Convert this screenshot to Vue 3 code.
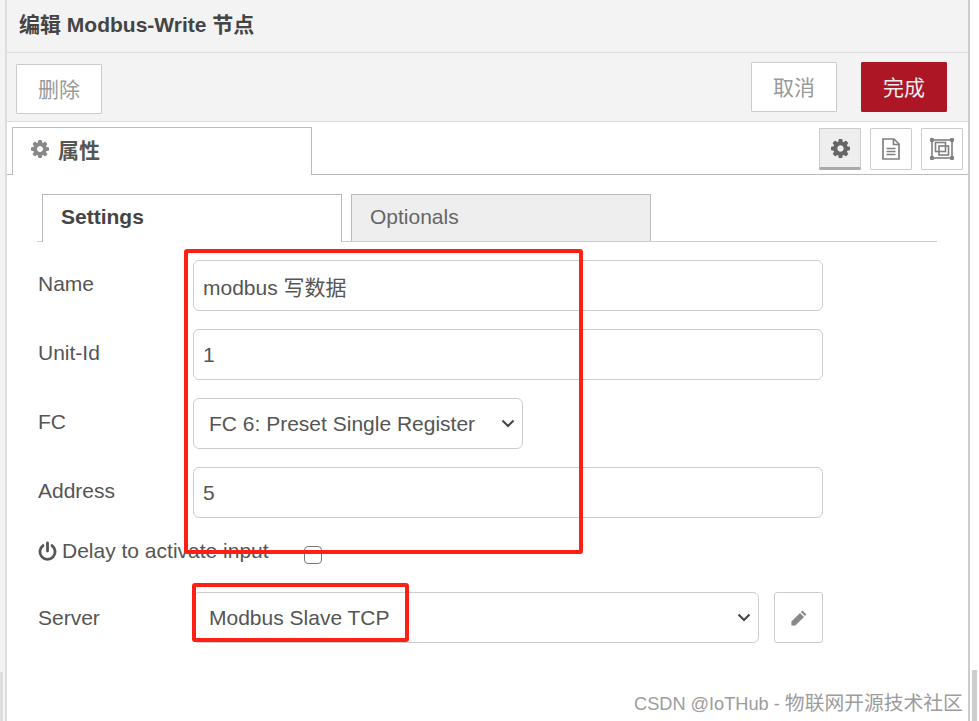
<template>
  <div class="screen">
    <div class="tray">
      <div class="tray-title">编辑 Modbus-Write 节点</div>
      <div class="tray-toolbar">
        <button class="btn delete-btn">删除</button>
        <div class="toolbar-right">
          <button class="btn">取消</button>
          <button class="btn primary">完成</button>
        </div>
      </div>

      <div class="tray-tabs">
        <div class="tray-tab">
          <svg class="tab-gear" viewBox="0 -128 1536 1536"><path :d="gearPath" /></svg>
          <span>属性</span>
        </div>
        <div class="tab-icons">
          <button class="icon-btn selected">
            <svg width="19" height="19" viewBox="0 -128 1536 1536"><path :d="gearPath" fill="#666" /></svg>
          </button>
          <button class="icon-btn">
            <svg width="20" height="22" viewBox="0 0 20 22" fill="none" stroke="#808080" stroke-width="1.7">
              <path d="M2 1h11l5 5v15H2z" />
              <path d="M12.5 1v5.5H18" />
              <path d="M5.5 10.5h9M5.5 13.5h9M5.5 16.5h9" />
            </svg>
          </button>
          <button class="icon-btn">
            <svg width="26" height="24" viewBox="0 0 26 24" fill="none" stroke="#808080" stroke-width="1.6">
              <rect x="3" y="3" width="20" height="18" />
              <rect x="6.5" y="5.5" width="10" height="9" />
              <rect x="10" y="9" width="9.5" height="9" />
              <g fill="#808080" stroke="none">
                <rect x="1" y="1" width="4" height="4" rx="1" />
                <rect x="21" y="1" width="4" height="4" rx="1" />
                <rect x="1" y="19" width="4" height="4" rx="1" />
                <rect x="21" y="19" width="4" height="4" rx="1" />
              </g>
            </svg>
          </button>
        </div>
      </div>

      <div class="tray-body">
        <div class="sub-tabs">
          <div class="sub-tab active">Settings</div>
          <div class="sub-tab">Optionals</div>
        </div>

        <div class="form">
          <div class="form-row">
            <label>Name</label>
            <input class="field" type="text" value="modbus 写数据" />
          </div>
          <div class="form-row">
            <label>Unit-Id</label>
            <input class="field" type="text" value="1" />
          </div>
          <div class="form-row">
            <label>FC</label>
            <select class="field picker fc-select">
              <option>FC 6: Preset Single Register</option>
            </select>
          </div>
          <div class="form-row">
            <label>Address</label>
            <input class="field" type="text" value="5" />
          </div>
          <div class="form-row delay-row">
            <label class="delay-label">
              <svg width="19" height="20" viewBox="0 0 19 20" fill="none" stroke="#555" stroke-width="2.8" stroke-linecap="round">
                <path d="M9.5 2v8" />
                <path d="M5 4.6a7.6 7.6 0 1 0 9 0" />
              </svg>
              Delay to activate input
            </label>
            <input class="check" type="checkbox" />
          </div>
          <div class="form-row">
            <label class="server-label">Server</label>
            <select class="field picker server-select">
              <option>Modbus Slave TCP</option>
            </select>
            <button class="edit-btn">
              <svg width="18" height="18" viewBox="0 0 18 18" fill="#888">
                <path d="M12.4 1.6l4 4-1.5 1.5-4-4z" />
                <path d="M10 4l4 4-8.6 8.6H1.4v-4z" />
              </svg>
            </button>
          </div>
        </div>
      </div>
    </div>

    <div class="scroll-left"></div>
    <div class="scroll-right"></div>
    <div class="mark mark-main"></div>
    <div class="mark mark-server"></div>
    <div class="watermark"><span class="mark-latin">CSDN @IoTHub - </span>物联网开源技术社区</div>
  </div>
</template>

<script setup>
const gearPath = 'M1024 640q0-106-75-181t-181-75-181 75-75 181 75 181 181 75 181-75 75-181zm512-109v222q0 12-8 23t-20 13l-185 28q-19 54-39 91 35 50 107 138 10 12 10 25t-9 23q-27 37-99 108t-94 71q-12 0-26-9l-138-108q-44 23-91 38-16 136-29 186-7 28-36 28h-222q-14 0-24.5-8.5t-11.5-21.5l-28-184q-49-16-90-37l-141 107q-10 9-25 9-14 0-25-11-126-114-165-168-7-10-7-23 0-12 8-23 15-21 51-66.5t54-70.5q-27-50-41-99l-183-27q-13-2-21-12.5t-8-23.5v-222q0-12 8-23t19-13l186-28q14-46 39-92-40-57-107-138-10-12-10-24 0-10 9-23 26-36 98.5-107.5t94.5-71.5q13 0 26 10l138 107q44-23 91-38 16-136 29-186 7-28 36-28h222q14 0 24.5 8.5t11.5 21.5l28 184q49 16 90 37l142-107q9-9 24-9 13 0 25 10 129 119 165 170 7 8 7 22 0 12-8 23-15 21-51 66.5t-54 70.5q26 50 41 98l183 28q13 2 21 12.5t8 23.5z'
</script>

<style scoped>
.screen {
  position: relative;
  width: 979px;
  height: 721px;
  overflow: hidden;
  background: #fff;
  font-family: "Liberation Sans", "Noto Sans CJK SC", sans-serif;
  font-size: 21px;
  color: #555;
}

.tray {
  box-sizing: border-box;
  width: 965px;
  height: 721px;
  border-left: 2px solid #ddd;
  border-right: 2px solid #ccc;
  margin-left: 5px;
  background: #fff;
  box-shadow: -5px 0 0 #f3f3f3;
}

.tray-title {
  box-sizing: border-box;
  height: 53px;
  padding: 0 0 0 12px;
  line-height: 50px;
  font-weight: bold;
  color: #444;
  background: #f3f3f3;
  border-bottom: 1px solid #ddd;
}

.tray-toolbar {
  box-sizing: border-box;
  height: 69px;
  display: flex;
  justify-content: space-between;
  padding: 11px 21px 0 9px;
  background: #f3f3f3;
  border-bottom: 1px solid #ddd;
}

.toolbar-right {
  display: flex;
  gap: 24px;
  margin-top: -2px;
}

.btn {
  box-sizing: border-box;
  width: 86px;
  height: 50px;
  border: 1px solid #ccc;
  border-radius: 1px;
  background: #fff;
  color: #999;
  font: inherit;
  padding: 0 0 3px;
}

.btn.primary {
  background: #ad1625;
  border-color: #ad1625;
  color: #eee;
}

.tray-tabs {
  box-sizing: border-box;
  height: 53px;
  display: flex;
  border-bottom: 1px solid #bbb;
}

.tray-tab {
  box-sizing: border-box;
  width: 300px;
  height: 48px;
  margin: 5px 0 -1px 5px;
  display: flex;
  align-items: center;
  gap: 9px;
  padding: 0 0 5px 18px;
  background: #fff;
  border: 1px solid #bbb;
  border-bottom: none;
  font-weight: bold;
  color: #555;
}

.tab-gear {
  width: 18px;
  height: 18px;
  fill: #888;
}

.tab-icons {
  display: flex;
  gap: 9px;
  margin: 6px 5px 0 auto;
}

.icon-btn {
  box-sizing: border-box;
  width: 42px;
  height: 42px;
  display: flex;
  align-items: center;
  justify-content: center;
  padding: 0;
  background: #fff;
  border: 1px solid #ccc;
  border-radius: 1px;
}

.icon-btn.selected {
  background: #eee;
  border-bottom: 3px solid #aaa;
}

.tray-body {
  padding: 19px 31px 0 30px;
}

.sub-tabs {
  display: flex;
  gap: 9px;
  height: 47px;
  padding-left: 5px;
  border-bottom: 1px solid #ccc;
}

.sub-tab {
  box-sizing: border-box;
  width: 300px;
  height: 47px;
  padding-left: 18px;
  line-height: 44px;
  background: #eee;
  border: 1px solid #bbb;
  border-bottom: none;
  color: #666;
}

.sub-tab.active {
  height: 48px;
  background: #fff;
  font-weight: bold;
  color: #444;
}

.form {
  padding: 18px 0 0 1px;
}

.form-row {
  display: flex;
  align-items: center;
  height: 51px;
  margin-bottom: 18px;
}

.form-row > label {
  width: 155px;
  flex: none;
  padding-bottom: 3px;
}

.form-row > .server-label {
  padding-bottom: 0;
}

.field {
  box-sizing: border-box;
  width: 630px;
  height: 51px;
  padding: 0 9px;
  border: 1px solid #ccc;
  border-radius: 6px;
  background: #fff;
  font: inherit;
  color: #555;
  outline: none;
}

.picker {
  appearance: none;
  padding: 0 30px 0 15px;
  background-image: url("data:image/svg+xml,%3Csvg xmlns='http://www.w3.org/2000/svg' width='14' height='9' viewBox='0 0 14 9'%3E%3Cpath d='M1.5 1.5L7 7l5.5-5.5' fill='none' stroke='%23444' stroke-width='2'/%3E%3C/svg%3E");
  background-repeat: no-repeat;
  background-position: right 7px center;
}

.fc-select {
  width: 330px;
}

.server-select {
  width: 566px;
}

.form-row.delay-row {
  height: 38px;
}

.form-row > .delay-label {
  display: flex;
  align-items: center;
  gap: 5px;
  width: 266px;
  padding-bottom: 8px;
}

.check {
  appearance: none;
  box-sizing: border-box;
  width: 18px;
  height: 18px;
  margin: 0;
  border: 1.5px solid #777;
  border-radius: 4px;
  background: #fff;
}

.edit-btn {
  box-sizing: border-box;
  width: 49px;
  height: 51px;
  margin-left: 15px;
  display: flex;
  align-items: center;
  justify-content: center;
  padding: 0;
  background: #fff;
  border: 1px solid #ccc;
  border-radius: 3px;
}

/* stuff that sits over the form */
.scroll-left {
  position: absolute;
  left: 0;
  top: 672px;
  width: 3px;
  height: 49px;
  background: #ddd;
}

.scroll-right {
  position: absolute;
  left: 972px;
  top: 670px;
  width: 5px;
  height: 51px;
  background: #ccc;
}

.mark {
  position: absolute;
  box-sizing: border-box;
  border: 4px solid #ff1f14;
  border-radius: 3px;
}

.mark-main {
  left: 184px;
  top: 249px;
  width: 399px;
  height: 305px;
}

.mark-server {
  left: 192px;
  top: 583px;
  width: 217px;
  height: 59px;
}

.watermark {
  position: absolute;
  left: 634px;
  top: 691px;
  font-size: 19.8px;
  line-height: 24px;
  color: #9c9c9c;
  white-space: nowrap;
}

.mark-latin {
  font-size: 18.2px;
}
</style>
